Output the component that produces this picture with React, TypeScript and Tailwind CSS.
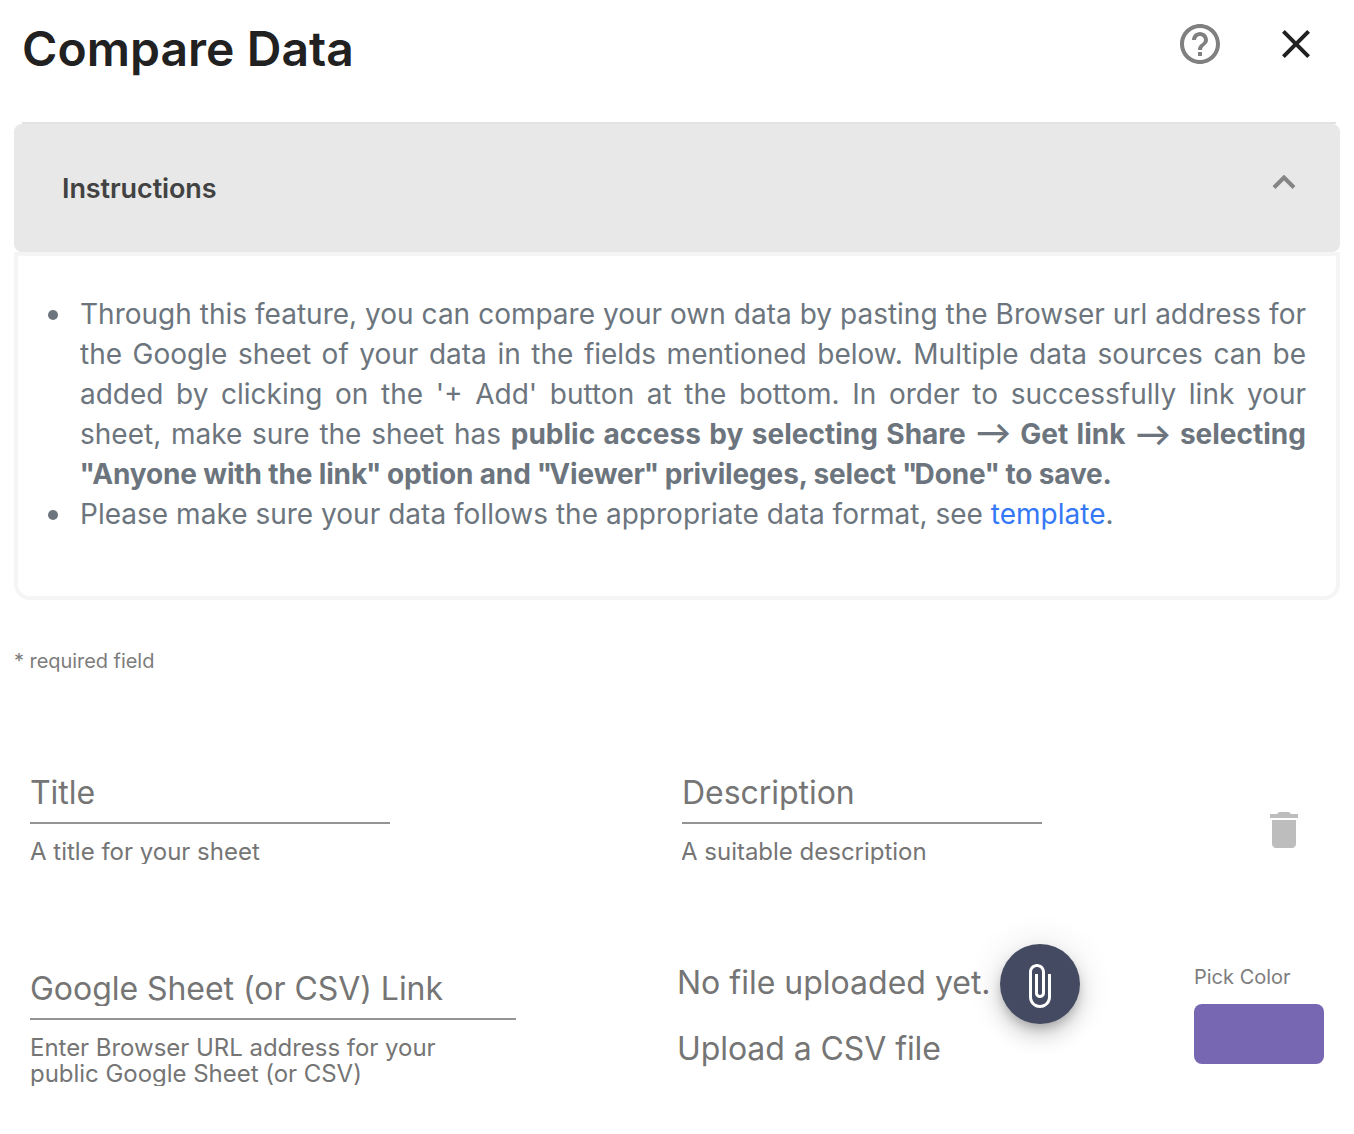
import React from "react";

function Field({ label, hint, className, hintClassName = "h-[26px]" }: { label: string; hint: React.ReactNode; className: string; hintClassName?: string }) {
  return (
    <div className={className}>
      <div className="h-[56px] border-b-2 border-[#949494] pt-[4px] text-[32px] text-[#757575]">
        <div className="h-[38px] overflow-hidden whitespace-nowrap leading-[42px] tracking-[-0.04px]">{label}</div>
      </div>
      <div className={"mt-[14px] overflow-hidden whitespace-nowrap pt-[1px] text-[24px] leading-[26px] text-[#757575] " + hintClassName}>{hint}</div>
    </div>
  );
}

function Bullet({ children }: { children: React.ReactNode }) {
  return (
    <li className="flex">
      <span className="mr-[22px] mt-[16px] size-[10px] shrink-0 rounded-full bg-[#6c757d]" />
      <p className="flex-1">{children}</p>
    </li>
  );
}

function Quoted({ children }: { children: React.ReactNode }) {
  return (
    <>
      <span className="-ml-[0.5px] tracking-[-2.8px]">"</span>
      {children}
      <span className="-ml-[1px] tracking-[-1px]">"</span>
    </>
  );
}

export default function App() {
  return (
    <main className="h-[1134px] w-[1354px] overflow-hidden bg-white font-['Inter',sans-serif]">
      <header className="flex h-[122px] items-start justify-between pl-[22px] pr-[34px] pt-[16px]">
        <h1 className="pt-[1px] text-[48px] font-semibold leading-[64px] tracking-[0.05px] text-[#212121]">Compare Data</h1>
        <div className="flex gap-[48px] pt-[4px]">
          <svg width="48" height="48" viewBox="0 0 24 24" fill="#808080"><path d="M11 18h2v-2h-2v2zm1-16C6.48 2 2 6.48 2 12s4.48 10 10 10 10-4.480 10-10S17.520 2 12 2zm0 18c-4.410 0-8-3.590-8-8s3.590-8 8-8 8 3.590 8 8-3.590 8-8 8zm0-14c-2.210 0-4 1.790-4 4h2c0-1.100.9-2 2-2s2 .9 2 2c0 2-3 1.750-3 5h2c0-2.250 3-2.500 3-5 0-2.210-1.790-4-4-4z" /></svg>
          <svg width="48" height="48" viewBox="0 0 24 24" fill="#212121"><path d="M19 6.410L17.590 5 12 10.590 6.410 5 5 6.410 10.590 12 5 17.590 6.410 19 12 13.410 17.590 19 19 17.590 13.410 12z" /></svg>
        </div>
      </header>
      <section className="mx-[14px]">
        <div className="ml-[8px] mr-[4px] h-[2px] bg-[#e2e2e2]" />
        <div className="flex h-[128px] items-center justify-between rounded-[8px] bg-[#e8e8e8] pl-[48px] pr-[44px]">
          <h2 className="pt-[2px] text-[27px] font-semibold tracking-[-0.1px] text-[#424242]">Instructions</h2>
          <svg className="-mt-[12px]" width="24" height="14" viewBox="0 0 24 14" fill="none" stroke="#858585" strokeWidth="4"><path d="M2 12.500L12 2.500L22 12.500" /></svg>
        </div>
        <div className="h-[348px] rounded-b-[16px] border-4 border-[#f5f5f5] pl-[30px] pr-[30px] pt-[38px]">
          <ul className="text-justify text-[28px] leading-[40px] text-[#6c757d]">
            <Bullet>Through this feature, you can compare your own data by pasting the Browser url address for the Google sheet of your data in the fields mentioned below. Multiple data sources can be added by clicking on the '+ Add' button at the bottom. In order to successfully link your sheet, make sure the sheet has <b>public access by selecting Share --&gt; Get link --&gt; selecting <span className="tracking-[-0.15px]"><Quoted>Anyone with the link</Quoted> option and <Quoted>Viewer</Quoted> privileges, select <Quoted>Done</Quoted> to save.</span></b></Bullet>
            <Bullet><span className="tracking-[0.02px]">Please make sure your data follows the appropriate data format, see <a className="text-[#3478f6]">template</a>.</span></Bullet>
          </ul>
        </div>
      </section>
      <p className="ml-[14px] mt-[46px] text-[20px] leading-[30px] tracking-[-0.05px] text-[#7d7d7d]">* required field</p>
      <section className="mt-[92px] flex h-[196px] pl-[30px]">
        <Field className="w-[360px]" label="Title" hint="A title for your sheet" />
        <Field className="ml-[292px] w-[360px]" label="Description" hint={<span className="-ml-px tracking-[-0.01px]">A suitable description</span>} />
        <svg className="ml-[218px] mt-[38px]" width="48" height="48" viewBox="0 0 24 24" fill="#bdbdbd"><path d="M6 19c0 1.100.9 2 2 2h8c1.100 0 2-.9 2-2V7H6v12zM19 4h-3.500l-1-1h-5l-1 1H5v2h14V4z" /></svg>
      </section>
      <section className="flex pl-[30px]">
        <Field className="w-[486px]" hintClassName="h-[52px]" label="Google Sheet (or CSV) Link" hint={<span className="tracking-[-0.03px]">Enter Browser URL address for your<br />public Google Sheet (or CSV)</span>} />
        <div className="ml-[161px] w-[517px] text-[32px] text-[#757575]">
          <div className="-mt-[20px] flex h-[80px] items-center gap-[11px]">
            <span className="w-[312px] whitespace-nowrap pb-[2px]">No file uploaded yet.</span>
            <button className="flex size-[80px] items-center justify-center rounded-full bg-[#454a63] shadow-[0_6px_10px_-2px_rgba(0,0,0,0.2),0_12px_20px_rgba(0,0,0,0.14),0_2px_36px_rgba(0,0,0,0.12)]">
              <svg className="-ml-[2px] mt-[4px]" width="48" height="48" viewBox="0 0 24 24" fill="white"><path d="M16.500 6v11.500c0 2.210-1.790 4-4 4s-4-1.790-4-4V5c0-1.380 1.120-2.500 2.500-2.500s2.500 1.120 2.500 2.500v10.500c0 .55-.45 1-1 1s-1-.45-1-1V6H10v9.500c0 1.380 1.120 2.500 2.500 2.500s2.500-1.120 2.500-2.500V5c0-2.210-1.790-4-4-4S7 2.790 7 5v12.500c0 3.040 2.460 5.500 5.500 5.500s5.500-2.460 5.500-5.500V6h-1.500z" /></svg>
            </button>
          </div>
          <p className="mt-[1px] leading-[48px] tracking-[-0.08px]">Upload a CSV file</p>
        </div>
        <div className="w-[130px] text-[20px] leading-[30px] text-[#7d7d7d]"><p className="-mt-[2px]">Pick Color</p><div className="mt-[12px] h-[60px] rounded-[8px] bg-[#7767b2]" /></div>
      </section>
    </main>
  );
}
